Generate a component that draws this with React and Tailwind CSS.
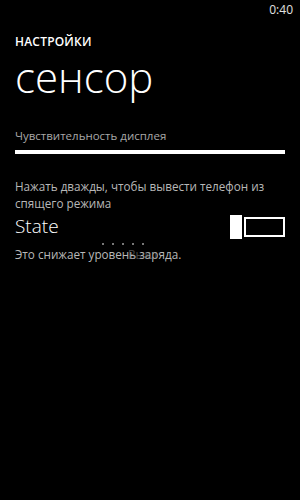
export default function App() {
  return (
    <div className="w-[300px] h-[500px] bg-black text-white overflow-hidden" style={{ fontFamily: '"Open Sans", "Noto Sans", sans-serif' }}>
      {/* Status bar */}
      <div className="h-[20px] flex justify-end items-center pr-[7px]">
        <span className="text-[12px] text-[#e0e0e0] leading-none">0:40</span>
      </div>

      <div className="pl-[15px] pr-[15px]">
        <div className="mt-[16px] text-[12px] font-semibold leading-none tracking-[0.2px]">НАСТРОЙКИ</div>
        <div className="mt-[8px] text-[42px] font-light leading-[42px]">сенсор</div>

        <div className="mt-[32px] text-[11.5px] text-[#a8a8a8] leading-none">Чувствительность дисплея</div>
        <div className="mt-[8px] h-[4px] bg-white"></div>

        <div className="mt-[24px] text-[11.7px] text-[#b8b8b8] leading-[17px]">
          Нажать дважды, чтобы вывести телефон из спящего режима
        </div>

        <div className="mt-[3px] flex items-center justify-between">
          <span className="text-[19px] font-light leading-none">State</span>
          <div className="flex items-center gap-[2px]">
            <div className="w-[12px] h-[24px] bg-white"></div>
            <div className="w-[41px] h-[20px] border-2 border-white"></div>
          </div>
        </div>

        <div className="relative">
          <div className="flex gap-[8px] pl-[87px] mt-[3px] h-[4px] items-center">
            <div className="w-[2px] h-[2px] bg-[#777]"></div>
            <div className="w-[2px] h-[2px] bg-[#777]"></div>
            <div className="w-[2px] h-[2px] bg-[#777]"></div>
            <div className="w-[2px] h-[2px] bg-[#777]"></div>
            <div className="w-[2px] h-[2px] bg-[#777]"></div>
          </div>
          <div className="mt-[3px] text-[11.7px] text-[#b8b8b8] leading-none">Это снижает уровень заряда.</div>
          <div className="absolute left-[113px] top-[7px] text-[11.7px] text-[#888] leading-none opacity-50">Выкл</div>
        </div>
      </div>
    </div>
  );
}
